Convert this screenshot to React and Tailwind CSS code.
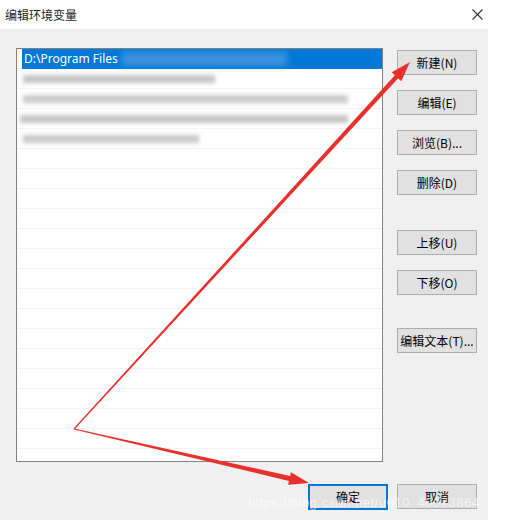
import React from 'react';

const font = { fontFamily: '"Noto Sans CJK SC", "Noto Sans", sans-serif' };

// tapered arrow: thin at the start, thick at the tip
function arrowPoints(x0, y0, x1, y1, w0, w1, headLen, headW) {
  const dx = x1 - x0;
  const dy = y1 - y0;
  const len = Math.hypot(dx, dy);
  const ux = dx / len;
  const uy = dy / len;
  const nx = -uy;
  const ny = ux;
  const bx = x1 - ux * headLen;
  const by = y1 - uy * headLen;
  const shaft = [
    [x0 + nx * w0 / 2, y0 + ny * w0 / 2],
    [bx + nx * w1 / 2, by + ny * w1 / 2],
    [bx + nx * headW / 2, by + ny * headW / 2],
    [x1, y1],
    [bx - nx * headW / 2, by - ny * headW / 2],
    [bx - nx * w1 / 2, by - ny * w1 / 2],
    [x0 - nx * w0 / 2, y0 - ny * w0 / 2],
  ];
  return shaft.map(p => p.join(',')).join(' ');
}

function Btn({ children, primary }) {
  return (
    <button
      className={
        primary
          ? 'w-[80px] h-[26px] bg-[#e1e1e1] border-2 border-[#0078d7] text-[12px] text-black'
          : 'w-[80px] h-[25px] bg-[#e1e1e1] border border-[#adadad] text-[12px] text-black'
      }
      style={font}
    >
      {children}
    </button>
  );
}

export default function App() {
  const rows = Array.from({ length: 21 });

  return (
    <div className="relative w-[518px] h-[520px] bg-white overflow-hidden flex flex-col" style={font}>
      {/* title bar */}
      <div className="h-[29px] flex items-center justify-between pl-[5px] pr-[35px] w-[518px]">
        <span className="text-[12px] text-[#222]">编辑环境变量</span>
        <svg width="11" height="11" viewBox="0 0 11 11">
          <path d="M0.5 0.5 L10.5 10.5 M10.5 0.5 L0.5 10.5" stroke="#333" strokeWidth="1.1" />
        </svg>
      </div>

      {/* body */}
      <div className="w-[488px] flex-1 bg-[#f0f0f0] pl-4 pt-[19px] flex flex-col">
        <div className="flex gap-[14px]">
          <div className="relative w-[367px] h-[414px] bg-white border border-[#828282] overflow-hidden">
            <div className="flex flex-col">
              {rows.map((_, i) => (
                <div key={i} className="h-[20px] border-b border-[#f3f3f3]" />
              ))}
            </div>
            {/* entries */}
            <div className="absolute inset-0 flex flex-col">
              <div className="ml-[5px] h-[20px] bg-[#0078d7] flex items-center relative">
                <span className="pl-[2px] text-[12px] text-white" style={{ fontFamily: '"Noto Sans", sans-serif' }}>
                  D:\Program Files
                </span>
                <div className="ml-[4px] h-[14px] w-[165px] bg-[#4b9be0] blur-[3px] opacity-80" />
              </div>
              <div className="h-[20px] flex items-center pl-[6px]">
                <div className="h-[8px] w-[192px] bg-[#c4c4c4] blur-[2px]" />
              </div>
              <div className="h-[20px] flex items-center pl-[6px]">
                <div className="h-[8px] w-[325px] bg-[#cacaca] blur-[2px]" />
              </div>
              <div className="h-[20px] flex items-center pl-[3px]">
                <div className="h-[8px] w-[328px] bg-[#c4c4c4] blur-[2px]" />
              </div>
              <div className="h-[20px] flex items-center pl-[6px]">
                <div className="h-[8px] w-[176px] bg-[#c8c8c8] blur-[2px]" />
              </div>
            </div>
          </div>

          <div className="flex flex-col pt-[2px]">
            <Btn>新建(N)</Btn>
            <div className="h-[15px]" />
            <Btn>编辑(E)</Btn>
            <div className="h-[15px]" />
            <Btn>浏览(B)...</Btn>
            <div className="h-[15px]" />
            <Btn>删除(D)</Btn>
            <div className="h-[35px]" />
            <Btn>上移(U)</Btn>
            <div className="h-[15px]" />
            <Btn>下移(O)</Btn>
            <div className="h-[33px]" />
            <Btn>编辑文本(T)...</Btn>
          </div>
        </div>

        <div className="mt-[22px] flex justify-end gap-[9px] pr-[11px]">
          <Btn primary>确定</Btn>
          <Btn>取消</Btn>
        </div>
      </div>

      {/* watermark */}
      <div className="absolute left-[248px] top-[493px] text-[13px] text-white opacity-60 tracking-[0.5px]" style={{ fontFamily: '"Liberation Sans", sans-serif' }}>
        https://blog.csdn.net/u010_40073864
      </div>

      {/* red annotation arrows */}
      <svg className="absolute left-0 top-0 pointer-events-none" width="518" height="520">
        <polygon points={arrowPoints(74, 429, 410, 62, 1.2, 4.5, 20, 13)} fill="#e8312d" />
        <polygon points={arrowPoints(74, 429, 309, 483, 1.2, 5, 20, 13)} fill="#e8312d" />
      </svg>
    </div>
  );
}
